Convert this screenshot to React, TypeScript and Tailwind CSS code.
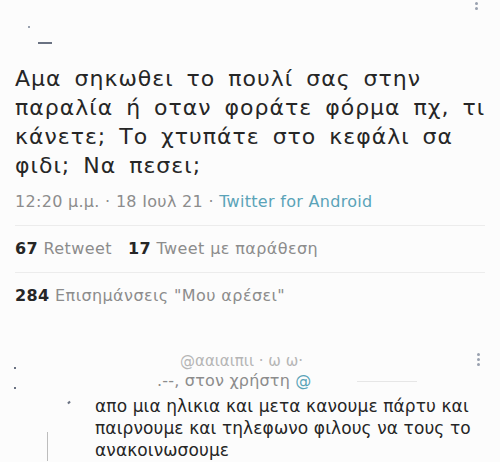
import React from "react";

const Dots = () => (
  <div className="flex flex-col gap-[2px] items-center">
    <span className="w-[3px] h-[3px] rounded-full bg-gray-400" />
    <span className="w-[3px] h-[3px] rounded-full bg-gray-400" />
    <span className="w-[3px] h-[3px] rounded-full bg-gray-400" />
  </div>
);

const App = () => {
  return (
    <div
      className="w-[500px] h-[462px] overflow-hidden bg-[#fcfcfc] text-[#262626]"
      style={{ fontFamily: '"DejaVu Sans", "Noto Sans", sans-serif' }}
    >
      <div className="flex justify-between pl-[28px] pr-[22px] -mt-[3px] h-[67px]">
        <div className="flex flex-col pt-[29px] gap-[14px]">
          <span className="w-[2px] h-[2px] bg-gray-400" />
          <span className="ml-[10px] w-[14px] h-[2px] bg-gray-500" />
        </div>
        <Dots />
      </div>

      <section className="pl-[15px] pr-[8px]">
        <p className="text-[22px] leading-[29px] tracking-[1px] [word-spacing:5px]">
          Αμα σηκωθει το πουλί σας στην παραλία ή οταν φοράτε φόρμα πχ, τι
          κάνετε; Το χτυπάτε στο κεφάλι σα φιδι; Να πεσει;
        </p>
        <p className="mt-[10px] text-[16px] leading-[24px] tracking-[0.3px] text-[#8c8c8c]">
          12:20 μ.μ. · 18 Ιουλ 21 ·{" "}
          <span className="text-[#5aa3b8]">Twitter for Android</span>
        </p>
        <div className="mt-[11px] mr-[7px] border-t border-[#ececec]" />
        <p className="py-[11px] text-[16px] leading-[24px] tracking-[0.4px] text-[#8c8c8c]">
          <span className="font-bold text-[#262626]">67</span> Retweet
          <span className="ml-[16px] font-bold text-[#262626]">17</span> Tweet με
          παράθεση
        </p>
        <div className="mr-[7px] border-t border-[#ececec]" />
        <p className="py-[11px] text-[16px] leading-[24px] tracking-[0.4px] text-[#8c8c8c]">
          <span className="font-bold text-[#262626]">284</span> Επισημάνσεις
          "Μου αρέσει"
        </p>
      </section>

      <section className="mt-[32px] flex">
        <div className="w-[95px] shrink-0 flex flex-col">
          <div className="pl-[14px] pt-[16px] flex flex-col gap-[18px]">
            <span className="w-[2px] h-[2px] bg-gray-500" />
            <span className="w-[2px] h-[2px] bg-gray-500" />
          </div>
          <span className="ml-[68px] mt-[12px] w-[2px] h-[3px] bg-gray-500 rotate-45" />
          <div className="ml-[47px] mt-[28px] w-px flex-1 bg-[#bdbdbd]" />
        </div>
        <div className="flex-1 pr-[15px]">
          <div className="flex justify-between items-start">
            <div className="pl-[85px] text-[15px] leading-[20px] text-[#b5b5b5]">
              @ααιαιπιι · ω ω·
            </div>
            <div className="mt-[2px] mr-[5px]">
              <Dots />
            </div>
          </div>
          <div className="flex items-center">
            <p className="pl-[62px] text-[16px] leading-[20px] tracking-[0.2px] text-[#8c8c8c]">
              .--, στον χρήστη <span className="text-[#5aa3b8]">@</span>
            </p>
            <div className="ml-[45px] w-[60px] border-t border-[#e6e6e6]" />
          </div>
          <p className="mt-[4px] text-[17px] leading-[22px] tracking-[0.1px]">
            απο μια ηλικια και μετα κανουμε πάρτυ και παιρνουμε και τηλεφωνο
            φιλους να τους το ανακοινωσουμε
          </p>
        </div>
      </section>
    </div>
  );
};

export default App;
